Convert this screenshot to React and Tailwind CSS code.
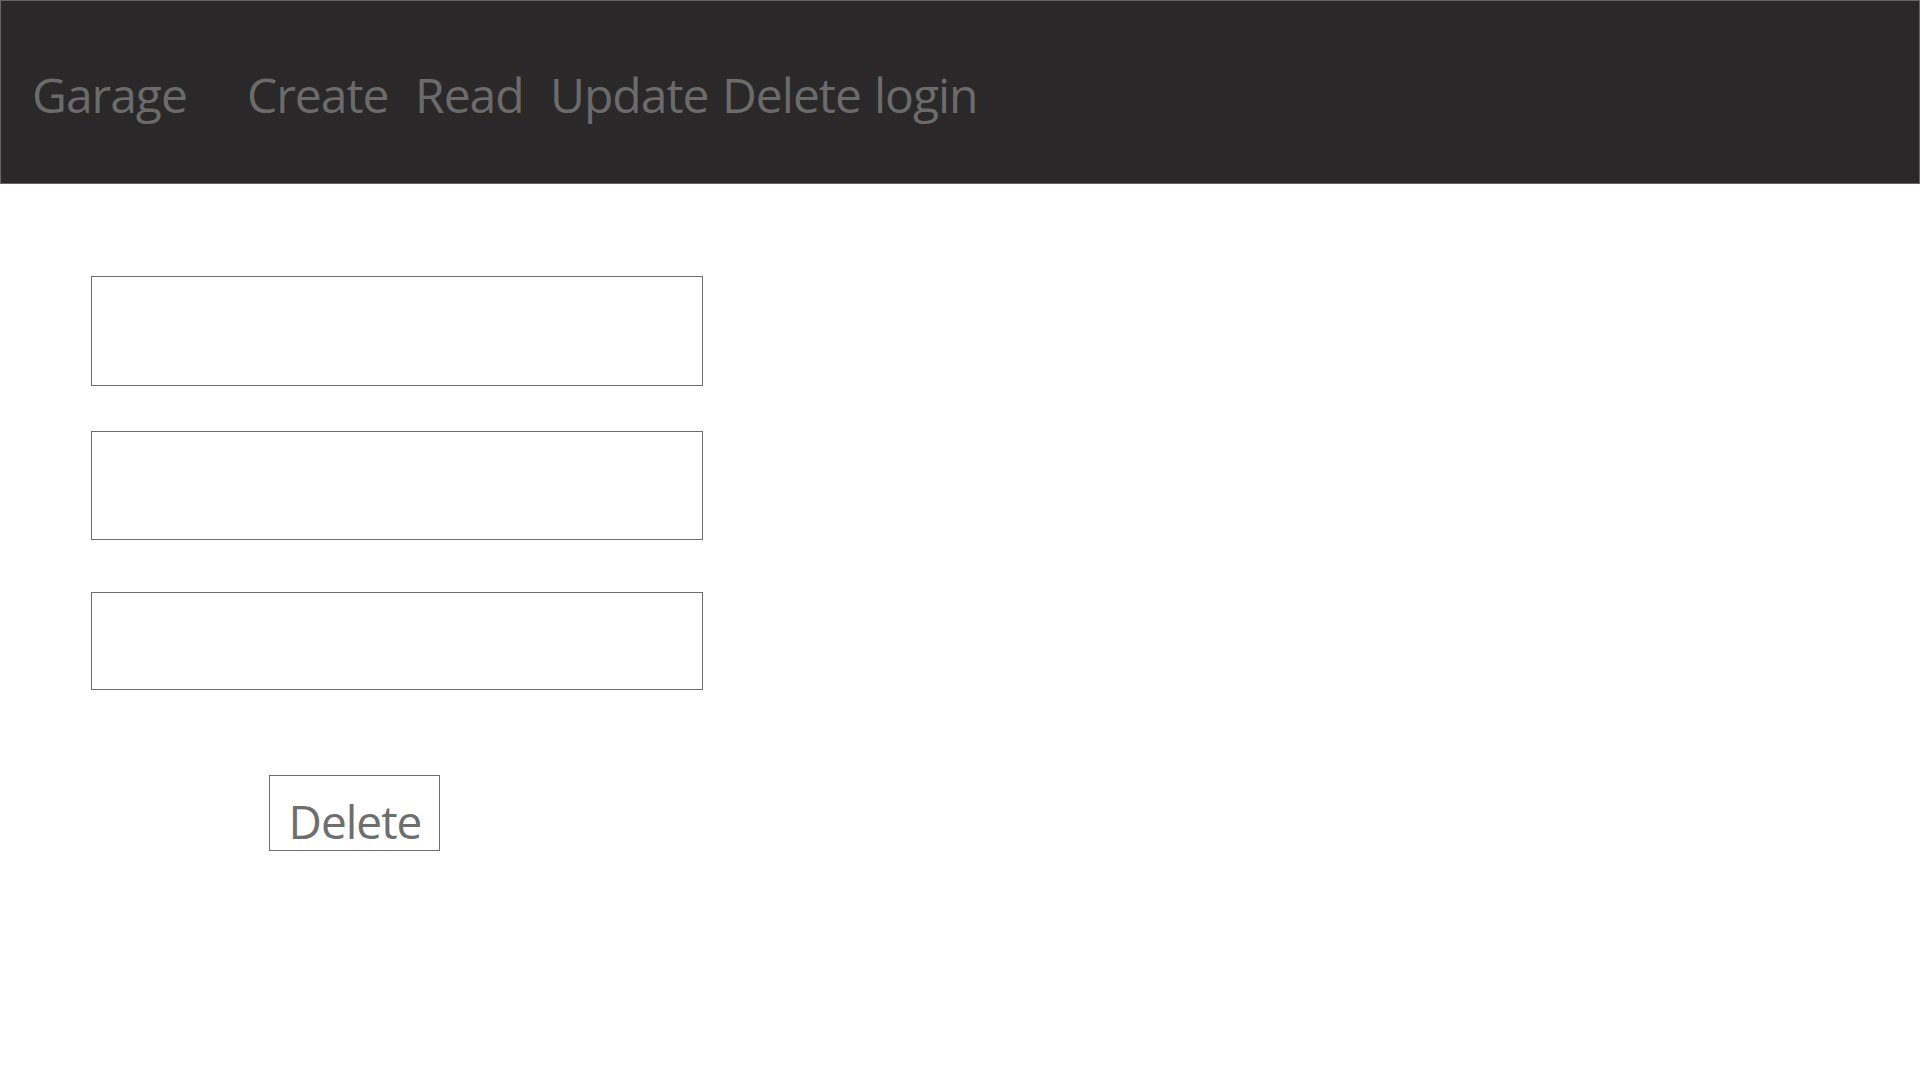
export default function App() {
  const font = { fontFamily: '"Open Sans", "Noto Sans", sans-serif' };
  return (
    <div className="min-h-screen w-full bg-white" style={font}>
      <header className="h-[184px] w-full bg-[#2a2829] border border-[#666666] flex items-center pl-[31px] pt-[6px] text-[#6b6b6b] text-[48px] tracking-[-1px]">
        <span className="w-[215px]">Garage</span>
        <nav className="flex items-center">
          <span className="w-[168px]">Create</span>
          <span className="w-[135px]">Read</span>
          <span className="w-[172px]">Update</span>
          <span className="mr-[13px]">Delete</span>
          <span>login</span>
        </nav>
      </header>
      <main className="pl-[91px] pt-[92px] flex flex-col">
        <div className="w-[612px] h-[110px] border border-[#6d6d6d]" />
        <div className="mt-[45px] w-[612px] h-[109px] border border-[#6d6d6d]" />
        <div className="mt-[52px] w-[612px] h-[98px] border border-[#6d6d6d]" />
        <button className="ml-[178px] mt-[85px] w-[171px] h-[76px] border border-[#6d6d6d] bg-white text-[#6e6e6e] text-[46px] leading-none flex items-end justify-center pb-[6px] pl-[1px] tracking-[-1px]">
          Delete
        </button>
      </main>
    </div>
  );
}
